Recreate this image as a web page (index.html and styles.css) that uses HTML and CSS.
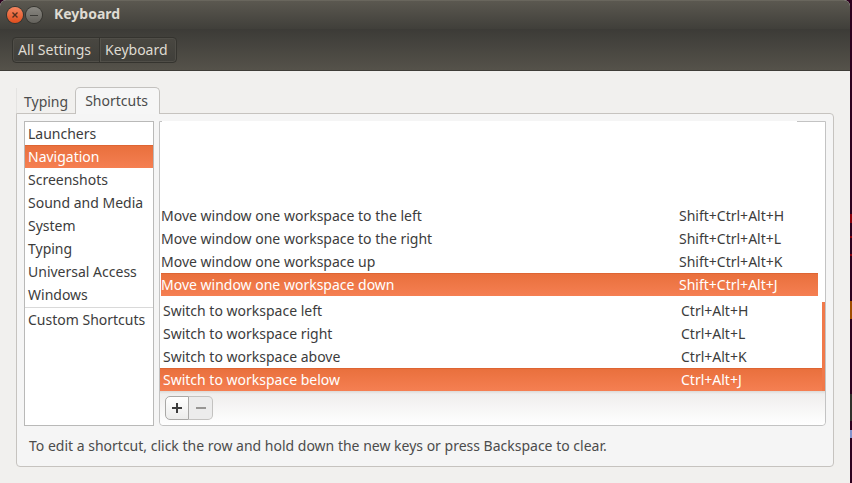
FILE: index.html
```html
<!DOCTYPE html>
<html lang="en">
<head>
<meta charset="utf-8">
<title>Keyboard</title>
<link rel="stylesheet" href="styles.css">
</head>
<body>
<div class="window">
  <header class="titlebar">
    <button class="orb orb-close" aria-label="Close">
      <svg viewBox="0 0 16 16" width="16" height="16"><path d="M5.500 5.500l5 5M10.500 5.500l-5 5" stroke="#54301f" stroke-width="1.400" fill="none"/></svg>
    </button>
    <button class="orb orb-min" aria-label="Minimize">
      <svg viewBox="0 0 16 16" width="16" height="16"><path d="M4 8.500h8" stroke="#3c3b37" stroke-width="1.200" fill="none"/></svg>
    </button>
    <h1 class="title">Keyboard</h1>
  </header>
  <nav class="toolbar">
    <div class="crumbs">
      <button class="crumb">All Settings</button>
      <button class="crumb">Keyboard</button>
    </div>
  </nav>
  <main class="content">
    <div class="tabs" role="tablist">
      <button class="tab" role="tab" aria-selected="false">Typing</button>
      <button class="tab tab-active" role="tab" aria-selected="true">Shortcuts</button>
    </div>
    <section class="panel">
      <div class="panes">
        <ul class="sidebar">
          <li><button class="item">Launchers</button></li>
          <li><button class="item selected">Navigation</button></li>
          <li><button class="item">Screenshots</button></li>
          <li><button class="item">Sound and Media</button></li>
          <li><button class="item">System</button></li>
          <li><button class="item">Typing</button></li>
          <li><button class="item">Universal Access</button></li>
          <li><button class="item">Windows</button></li>
          <li class="separated"><button class="item">Custom Shortcuts</button></li>
        </ul>
        <div class="list">
          <div class="rows">
            <table class="keys keys-move">
              <tbody>
                <tr><td>Move window one workspace to the left</td><td class="accel">Shift+Ctrl+Alt+H</td></tr>
                <tr><td>Move window one workspace to the right</td><td class="accel">Shift+Ctrl+Alt+L</td></tr>
                <tr><td>Move window one workspace up</td><td class="accel">Shift+Ctrl+Alt+K</td></tr>
                <tr class="selected"><td>Move window one workspace down</td><td class="accel">Shift+Ctrl+Alt+J</td></tr>
              </tbody>
            </table>
            <div class="switch-group">
              <table class="keys keys-switch">
                <tbody>
                  <tr><td>Switch to workspace left</td><td class="accel">Ctrl+Alt+H</td></tr>
                  <tr><td>Switch to workspace right</td><td class="accel">Ctrl+Alt+L</td></tr>
                  <tr><td>Switch to workspace above</td><td class="accel">Ctrl+Alt+K</td></tr>
                  <tr class="selected"><td>Switch to workspace below</td><td class="accel">Ctrl+Alt+J</td></tr>
                </tbody>
              </table>
            </div>
          </div>
          <div class="actions">
            <button class="action action-add" aria-label="Add"><svg viewBox="0 0 12 12" width="12" height="12"><path d="M1 5h4V1h2v4h4v2H7v4H5V7H1z" fill="#3c3c3c"/></svg></button>
            <button class="action action-remove" aria-label="Remove" disabled><svg viewBox="0 0 12 12" width="12" height="12"><path d="M1 5h10v2H1z" fill="#979694"/></svg></button>
          </div>
        </div>
      </div>
      <p class="hint">To edit a shortcut, click the row and hold down the new keys or press Backspace to clear.</p>
    </section>
  </main>
</div>
</body>
</html>
```
FILE: styles.css
```css
* { box-sizing: border-box; }

body {
  margin: 0;
  padding-right: 2px;
  font: 14px/23px "Noto Sans", "Open Sans", sans-serif;
  color: #3c3c3c;
  background: #2c001e linear-gradient(
    #2c001e 214px, #8c000c 214px 223px, #2c001e 223px 236px,
    #8c000c 236px 238px, #2c001e 238px 254px, #8c000c 254px 256px, #2c001e 256px 301px,
    #a04d00 301px 319px, #2c001e 319px 394px, #30312c 394px 421px,
    #2c001e 421px 430px, #8393cc 430px 438px, #2c001e 438px) no-repeat;
}

button {
  margin: 0;
  padding: 0;
  border: 0;
  background: none;
  font: inherit;
  color: inherit;
}

svg { display: block; }

.window {
  display: flex;
  flex-direction: column;
  min-height: 100vh;
  border-radius: 6px 6px 0 0;
  background: #f1f0ee;
  overflow: hidden;
}

.titlebar {
  display: flex;
  align-items: center;
  gap: 3px;
  height: 29px;
  padding-left: 7px;
  border-top: 1px solid #69665d;
  background: linear-gradient(#5b5850, #403f3a);
}

.orb {
  width: 16px;
  height: 16px;
  border-radius: 50%;
  box-shadow: 0 0 0 1px #35342f;
}

.orb-close { background: linear-gradient(#f58660, #e04e1d); }
.orb-min { background: linear-gradient(#8a8882, #64625c); }

.title {
  margin: 0 0 0 9px;
  font-size: 14px;
  line-height: 20px;
  padding-bottom: 2px;
  font-weight: 700;
  color: #dfdbd2;
}

.toolbar {
  height: 42px;
  padding: 8px 12px;
  border-bottom: 1px solid #3f3d38;
  background: linear-gradient(#3c3b37, #55524a);
}

.crumbs {
  display: inline-flex;
  border: 1px solid #35342f;
  border-radius: 4px;
  background: linear-gradient(#494741, #403f3a);
  box-shadow: inset 0 0 0 1px #504e48;
}

.crumb {
  height: 24px;
  padding: 0 8px 2px 5px;
  color: #dfdbd2;
}

.crumb + .crumb {
  border-left: 1px solid #35342f;
  box-shadow: inset 1px 0 #55534c;
}

.content {
  display: flex;
  flex: 1;
  flex-direction: column;
  padding: 16px;
}

.tabs {
  display: flex;
  align-items: flex-end;
  height: 27px;
}

.tab {
  height: 26px;
  padding: 2px 7px 1px;
  border-left: 1px solid #e4e3e1;
  color: #4c4c4c;
}

.tab-active {
  z-index: 1;
  height: 27px;
  padding: 0 11px 1px 9px;
  border: 1px solid #c3c1be;
  border-bottom: 0;
  border-radius: 5px 5px 0 0;
  background: #f6f6f6;
}

.panel {
  display: flex;
  flex: 1;
  flex-direction: column;
  margin-top: -1px;
  padding: 7px;
  border: 1px solid #c6c3bf;
  border-radius: 0 4px 4px 4px;
  background: #f5f5f5;
}

.panes {
  display: flex;
  flex: 1;
  gap: 5px;
}

.sidebar {
  flex: none;
  width: 130px;
  margin: 0;
  padding: 0;
  border: 1px solid #b9b9b8;
  background: #fff;
  list-style: none;
}

.item {
  display: block;
  width: 100%;
  height: 23px;
  padding-left: 3px;
  text-align: left;
  white-space: nowrap;
}

.separated {
  margin-top: 1px;
  border-top: 1px solid #d9d9d9;
}

.selected {
  color: #fff;
  background: linear-gradient(#de6533 1px, #e9703d 1px, #f57f52);
}

.list {
  position: relative;
  display: flex;
  flex: 1;
  flex-direction: column;
  border: 1px solid #c3c3c3;
  border-radius: 0 0 4px 4px;
  background: #fff;
}

.list::before {
  content: "";
  position: absolute;
  top: -1px;
  left: 2px;
  right: 28px;
  height: 1px;
  background: #fff;
}

.rows {
  display: flex;
  flex: 1;
  flex-direction: column;
  justify-content: flex-end;
  gap: 3px;
}

.keys {
  width: 100%;
  border-collapse: collapse;
  table-layout: fixed;
}

.keys tr { height: 23px; }
.keys td { padding: 0; white-space: nowrap; }
.keys .accel { width: 139px; }

.keys-move { width: auto; margin: 0 7px 0 1px; }
.keys-switch td:first-child { padding-left: 3px; }
.keys-switch .accel { width: 144px; }

.switch-group { position: relative; }

.switch-group::after {
  content: "";
  position: absolute;
  top: 3px;
  right: 0;
  bottom: 0;
  width: 3px;
  background: #f0794a;
}

.actions {
  display: flex;
  height: 34px;
  padding: 5px;
  border-radius: 0 0 4px 4px;
  background: linear-gradient(#dcdad7, #efeeed 3px, #fff);
}

.action {
  display: flex;
  align-items: center;
  justify-content: center;
  width: 24px;
  height: 24px;
  border: 1px solid #a9a8a6;
}

.action-add {
  border-radius: 5px 0 0 5px;
  background: linear-gradient(#fff, #ececeb);
}

.action-remove {
  border-color: #c3c2c0;
  border-left: 0;
  border-radius: 0 5px 5px 0;
  background: #ececec;
}

.hint {
  margin: 8px 5px 2px;
  color: #4c4c4c;
}
```
